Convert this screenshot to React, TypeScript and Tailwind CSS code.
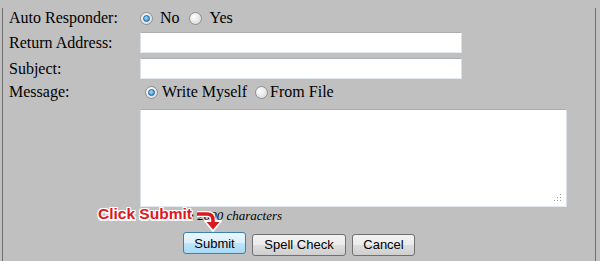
import React from "react";

const Radio: React.FC<{ checked?: boolean }> = ({ checked }) => (
  <span className="inline-flex w-[13px] h-[13px] shrink-0 items-center justify-center rounded-full border border-[#8e8f8f] bg-[radial-gradient(circle_at_35%_35%,#ffffff,#d4d4d4)]">
    {checked && (
      <span className="block w-[7px] h-[7px] rounded-full border border-[#1b5f9a] bg-[radial-gradient(circle_at_40%_35%,#9ddcff,#2a83cc)]" />
    )}
  </span>
);

const Field: React.FC = () => (
  <div className="w-[322px] h-[21px] bg-white border border-t-[#abadb3] border-l-[#dbdfe6] border-r-[#dbdfe6] border-b-[#e3e9ef]" />
);

const Button: React.FC<{ label: string; hover?: boolean; w: string }> = ({ label, hover, w }) => (
  <button
    className={
      "h-[22px] rounded-[3px] border font-['Liberation_Sans',Arial,sans-serif] text-[13px] text-black leading-none " +
      w +
      (hover
        ? " border-[#3c7fb1] bg-[linear-gradient(#eaf6fd_0%,#d9f0fc_50%,#bee6fd_51%,#a7d9f5_100%)]"
        : " border-[#707070] bg-[linear-gradient(#f2f2f2_0%,#ebebeb_50%,#dddddd_51%,#cfcfcf_100%)]")
    }
  >
    {label}
  </button>
);

export default function App() {
  return (
    <div className="relative w-[600px] h-[261px] overflow-hidden bg-[#c0c0c0] text-black text-[16px] font-['Liberation_Serif','Times_New_Roman',serif]">
      <div className="ml-[2px] w-[594px] h-full border-l border-r border-[#6f6f6f] pl-[6px]">
        {/* auto responder */}
        <div className="mt-[8px] h-[20px] flex items-center leading-[20px]">
          <div className="w-[131px]">Auto Responder:</div>
          <Radio checked />
          <span className="ml-[7px]">No</span>
          <span className="ml-[9px] flex"><Radio /></span>
          <span className="ml-[8px]">Yes</span>
        </div>

        <div className="mt-[4px] h-[21px] flex items-center leading-[20px]">
          <div className="w-[131px]">Return Address:</div>
          <Field />
        </div>

        <div className="mt-[5px] h-[21px] flex items-center leading-[20px]">
          <div className="w-[131px]">Subject:</div>
          <Field />
        </div>

        <div className="mt-[3px] h-[20px] flex items-center leading-[20px]">
          <div className="w-[136px]">Message:</div>
          <Radio checked />
          <span className="ml-[4px]">Write Myself</span>
          <span className="ml-[8px] flex"><Radio /></span>
          <span className="ml-[2px]">From File</span>
        </div>

        {/* message body */}
        <div className="mt-[7px] flex">
          <div className="w-[131px]" />
          <div className="relative w-[427px] h-[98px] bg-white border border-t-[#abadb3] border-l-[#dbdfe6] border-r-[#dbdfe6] border-b-[#e3e9ef]">
            <textarea className="w-full h-full resize-none outline-none bg-transparent" />
            <svg className="absolute right-[4px] bottom-[4px]" width="8" height="8" viewBox="0 0 8 8">
              <rect x="6" y="0" width="1" height="1" fill="#9a9a9a" />
              <rect x="6" y="3" width="1" height="1" fill="#9a9a9a" />
              <rect x="3" y="3" width="1" height="1" fill="#9a9a9a" />
              <rect x="6" y="6" width="1" height="1" fill="#9a9a9a" />
              <rect x="3" y="6" width="1" height="1" fill="#9a9a9a" />
              <rect x="0" y="6" width="1" height="1" fill="#9a9a9a" />
            </svg>
          </div>
        </div>

        <div className="mt-[1px] h-[16px] flex leading-[16px]">
          <div className="w-[133px]" />
          <span className="italic text-[13px]">Maximum 2000 characters</span>
        </div>

        <div className="mt-[8px] flex">
          <div className="w-[174px]" />
          <Button label="Submit" hover w="w-[63px]" />
          <span className="ml-[6px]"><Button label="Spell Check" w="w-[94px]" /></span>
          <span className="ml-[6px]"><Button label="Cancel" w="w-[63px]" /></span>
        </div>
      </div>

      {/* annotation over the form */}
      <div className="absolute left-[98px] top-[205px] font-['Liberation_Sans',Arial,sans-serif] font-bold text-[15.5px] leading-[18px] text-[#dc1720] [text-shadow:-1px_-1px_0_#fff,1px_-1px_0_#fff,-1px_1px_0_#fff,1px_1px_0_#fff,0_1px_0_#fff,0_-1px_0_#fff,1px_0_0_#fff,-1px_0_0_#fff,0_2px_0_#fff,1px_2px_0_#fff,-1px_2px_0_#fff]">
        Click Submit
      </div>
      <svg className="absolute left-[191px] top-[208px]" width="34" height="26" viewBox="0 0 34 26">
        <path d="M6 6 H16 Q22 6 22 12 V15" fill="none" stroke="#fff" strokeWidth="6" />
        <polygon points="14,13 30,13 22,23" fill="#fff" stroke="#fff" strokeWidth="2" strokeLinejoin="round" />
        <path d="M6 6 H16 Q22 6 22 12 V15" fill="none" stroke="#dc1720" strokeWidth="3.5" />
        <polygon points="15.5,14 28.5,14 22,21.5" fill="#dc1720" />
      </svg>
    </div>
  );
}
